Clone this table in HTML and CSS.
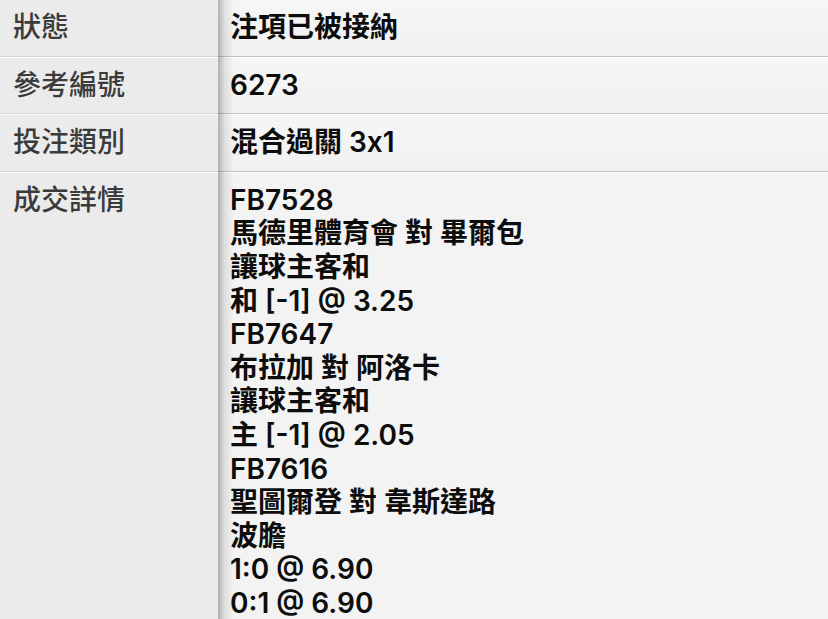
FILE: index.html
```html
<!DOCTYPE html>
<html lang="zh-Hant">
<head>
    <meta charset="UTF-8">
    <title>注項詳情</title>
    <meta name="viewport" content="width=device-width, initial-scale=1.0">
    <link rel="stylesheet" href="styles.css">
</head>
<body>
    <div class="bet-table">
        <div class="bet-row first">
            <div class="bet-label">狀態</div>
            <div class="bet-value">注項已被接納</div>
        </div>
        <div class="bet-row">
            <div class="bet-label">參考編號</div>
            <div class="bet-value">6273</div>
        </div>
        <div class="bet-row">
            <div class="bet-label">投注類別</div>
            <div class="bet-value">混合過關 3x1</div>
        </div>
        <div class="bet-row last">
            <div class="bet-label">成交詳情</div>
            <div class="bet-value">
                <div>FB7528</div>
                <div>馬德里體育會 對 畢爾包</div>
                <div>讓球主客和</div>
                <div>和 [-1] @ 3.25</div>
                <div>FB7647</div>
                <div>布拉加 對 阿洛卡</div>
                <div>讓球主客和</div>
                <div>主 [-1] @ 2.05</div>
                <div>FB7616</div>
                <div>聖圖爾登 對 韋斯達路</div>
                <div>波膽</div>
                <div>1:0 @ 6.90</div>
                <div>0:1 @ 6.90</div>
            </div>
        </div>
    </div>
</body>
</html>
```

FILE: styles.css
```css
body {
    margin: 0;
    background: #ebebeb;
    font-family: Inter, "Noto Sans CJK TC", sans-serif;
    font-size: 28px;
    line-height: 33.6px;
    font-weight: 500;
}
.bet-table {
    position: relative;
}
/* shadow cast by the label column onto the values */
.bet-table::before {
    content: "";
    position: absolute;
    top: 0;
    bottom: 0;
    left: 218px;
    width: 16px;
    background: linear-gradient(90deg, rgba(0,0,0,0.28) 0%, rgba(0,0,0,0.09) 40%, rgba(0,0,0,0) 100%);
    pointer-events: none;
}
.bet-row {
    display: flex;
}
.bet-label {
    width: 218px;
    flex-shrink: 0;
    box-sizing: border-box;
    padding: 11px 13px;
    color: #3b3b3b;
    background: #ebebeb;
    border-top: 1px solid #fff;
    border-bottom: 1px solid #d6d6d6;
}
.bet-value {
    flex: 1;
    padding: 11px 12px;
    color: #0d0d0d;
    font-weight: 600;
    background: linear-gradient(180deg, #f6f6f6 0%, #f1f1f1 100%);
    border-top: 1px solid #fff;
    border-bottom: 1px solid #c4c4c4;
}
.bet-row.first .bet-label,
.bet-row.first .bet-value {
    border-top: none;
}
.bet-row.last .bet-label,
.bet-row.last .bet-value {
    border-bottom: none;
}
.bet-row.last .bet-value {
    background: #f3f3f3;
}
```
